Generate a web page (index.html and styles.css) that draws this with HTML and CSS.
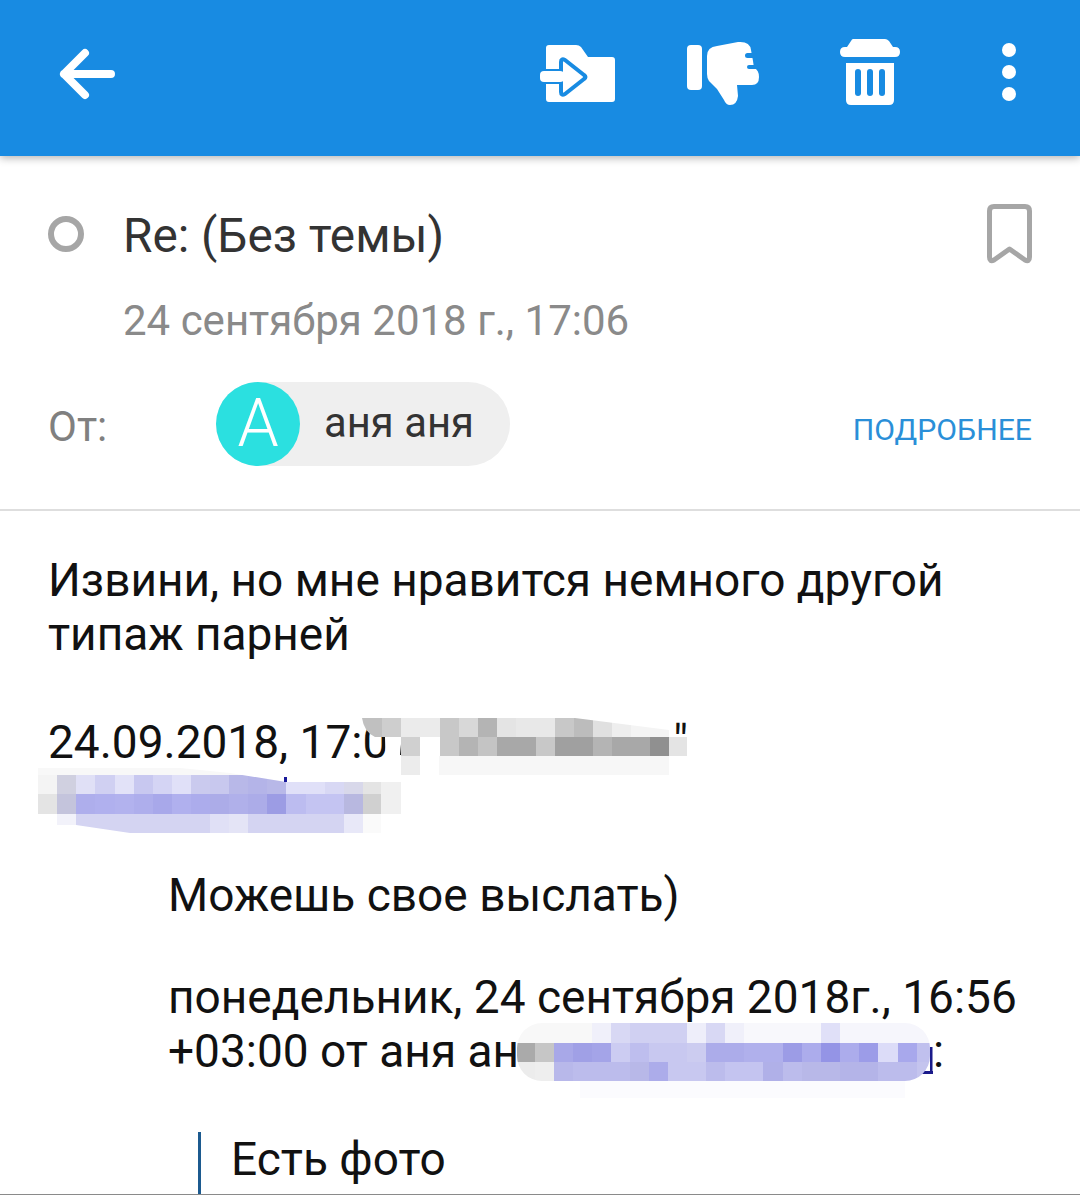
FILE: index.html
```html
<!DOCTYPE html>
<html lang="ru">
<head>
  <meta charset="UTF-8" />
  <meta name="viewport" content="width=device-width, initial-scale=1.0"/>
  <title>Письмо</title>
  <link rel="stylesheet" href="styles.css">
</head>
<body>

<div class="screen">
  <header class="toolbar">
    <svg class="toolbar-icons" width="1080" height="156" viewBox="0 0 1080 156">
      <!-- back -->
      <path d="M111 74H64M85 53L64 74L85 95" fill="none" stroke="#fff" stroke-width="8" stroke-linecap="round" stroke-linejoin="round"/>
      <!-- move to folder -->
      <path d="M549 45H576Q579 45 581 47L588 57H612Q615 57 615 60V99Q615 102 612 102H549Q546 102 546 99V48Q546 45 549 45Z" fill="#fff"/>
      <path d="M543 71H561V62Q561 58 565 60L584 75Q587 77 584 79L565 94Q561 96 561 92V82H543Q540 82 540 76.500Q540 71 543 71Z" fill="#fff" stroke="#188be2" stroke-width="4" stroke-linejoin="round"/>
      <rect x="540" y="71" width="24" height="11" rx="4" fill="#fff"/>
      <!-- spam -->
      <rect x="687" y="45" width="15" height="45" rx="4" fill="#fff"/>
      <path d="M707 56Q707 47 717 46L738 42Q750 41 751 50L753 61L754 68Q759 70 759 77Q759 85 752 85H737L738 96Q737 105 730 105Q726 105 724 100L717 89L709 81Q707 78 707 74Z" fill="#fff"/>
      <rect x="745" y="53" width="12" height="5" rx="2.500" fill="#188be2"/>
      <rect x="747" y="65" width="12" height="4" rx="2" fill="#188be2"/>
      <!-- delete -->
      <path d="M853 39H885Q887 39 889 41L893 47H895Q900 47 900 52Q900 57 895 57H845Q840 57 840 52Q840 47 845 47H847L851 41Q852 39 853 39Z" fill="#fff"/>
      <path d="M846 63H894V100Q894 105 889 105H851Q846 105 846 100Z" fill="#fff"/>
      <rect x="855" y="69" width="6" height="27" rx="3" fill="#188be2"/>
      <rect x="867" y="69" width="6" height="27" rx="3" fill="#188be2"/>
      <rect x="879" y="69" width="6" height="27" rx="3" fill="#188be2"/>
      <!-- more -->
      <circle cx="1009" cy="50" r="7" fill="#fff"/>
      <circle cx="1009" cy="72" r="7" fill="#fff"/>
      <circle cx="1009" cy="94" r="7" fill="#fff"/>
    </svg>
  </header>

  <section class="meta">
    <div class="subject-row">
      <span class="unread-dot"></span>
      <h1 class="subject">Re: (Без темы)</h1>
      <svg class="bookmark" width="45" height="60" viewBox="0 0 45 60">
        <path d="M7 2.500H38Q42.500 2.500 42.500 7V53Q42.500 58.500 38 56L22.500 45L7 56Q2.500 58.500 2.500 53V7Q2.500 2.500 7 2.500Z" fill="none" stroke="#a6a6a6" stroke-width="5" stroke-linejoin="round"/>
      </svg>
    </div>
    <div class="date">24 сентября 2018 г., 17:06</div>
    <div class="from-row">
      <span class="from-label">От:</span>
      <span class="sender">
        <span class="avatar">А</span>
        <span class="sender-name">аня аня</span>
      </span>
      <span class="more-link">ПОДРОБНЕЕ</span>
    </div>
  </section>

  <main class="message">
    <p class="reply">Извини, но мне нравится немного другой<br>типаж парней</p>
    <p class="quote-head">24.09.2018, 17:06,<span class="gap-name"></span>"<br>&nbsp;</p>
    <div class="quote">
      <p class="quote-text">Можешь свое выслать)</p>
      <p class="quote-head-2">понедельник, 24 сентября 2018г., 16:56<br>+03:00 от аня ан<span class="gap-mail"></span><span class="mail-end"></span>:</p>
      <div class="quote-inner">Есть фото</div>
    </div>
  </main>

  <!-- pixelated patches over the hidden names and addresses -->
  <svg class="censor" width="1080" height="1195" viewBox="0 0 1080 1195">
    <defs>
      <clipPath id="clipName"><path d="M362 718H575L669 730L688 732V775H401L401 745L386 737H375Q364 732 362 718Z"/></clipPath>
      <clipPath id="clipMail"><path d="M38 768H180L230 773L286 782H401V814H381V833H130L76 825H38Z"/></clipPath>
      <clipPath id="clipAddr"><rect x="517" y="1023" width="413" height="58" rx="25"/></clipPath>
    </defs>

    <path d="M385 737H440V775H401L386 770Z" fill="#fff"/>
    <path d="M401 744H405L402 755H400Z" fill="#111"/>
    <g clip-path="url(#clipName)">
      <rect x="401" y="737" width="286" height="38" fill="#fff"/>
      <rect x="362" y="718" width="20" height="19" fill="#c0c0c0"/>
      <rect x="382" y="718" width="19" height="19" fill="#cecece"/>
      <rect x="401" y="718" width="39" height="19" fill="#ebebeb"/>
      <rect x="440" y="718" width="19" height="19" fill="#c8c8c8"/>
      <rect x="459" y="718" width="19" height="19" fill="#d8d8d8"/>
      <rect x="478" y="718" width="19" height="19" fill="#b4b4b4"/>
      <rect x="497" y="718" width="19" height="19" fill="#e4e4e4"/>
      <rect x="516" y="718" width="39" height="19" fill="#e8e8e8"/>
      <rect x="555" y="718" width="19" height="19" fill="#c8c8c8"/>
      <rect x="574" y="718" width="19" height="19" fill="#bcbcbc"/>
      <rect x="593" y="718" width="19" height="19" fill="#e0e0e0"/>
      <rect x="612" y="718" width="19" height="19" fill="#eeeeee"/>
      <rect x="631" y="718" width="38" height="19" fill="#f4f4f4"/>

      <rect x="401" y="737" width="19" height="19" fill="#d0d0d0"/>
      <rect x="440" y="737" width="19" height="19" fill="#c8c8c8"/>
      <rect x="459" y="737" width="19" height="19" fill="#b4b4b4"/>
      <rect x="478" y="737" width="19" height="19" fill="#c4c4c4"/>
      <rect x="497" y="737" width="39" height="19" fill="#a8a8a8"/>
      <rect x="536" y="737" width="19" height="19" fill="#c8c8c8"/>
      <rect x="555" y="737" width="38" height="19" fill="#a0a0a0"/>
      <rect x="593" y="737" width="19" height="19" fill="#b4b4b4"/>
      <rect x="612" y="737" width="38" height="19" fill="#a8a8a8"/>
      <rect x="650" y="737" width="19" height="19" fill="#909090"/>
      <rect x="669" y="737" width="18" height="19" fill="#e4e4e4"/>

      <rect x="401" y="756" width="19" height="19" fill="#ececec"/>
      <rect x="439" y="756" width="230" height="19" fill="#f7f7f7"/>
    </g>

    <path d="M38 764H286V782H38Z" fill="#fff"/>
    <g clip-path="url(#clipMail)">
      <rect x="38" y="764" width="363" height="11" fill="#f8f8f8"/>
      <rect x="38" y="775" width="19" height="19" fill="#f4f4f4"/>
      <rect x="57" y="775" width="19" height="19" fill="#d0d0e0"/>
      <rect x="76" y="775" width="19" height="19" fill="#e0e0f6"/>
      <rect x="95" y="775" width="20" height="19" fill="#d0d0f2"/>
      <rect x="115" y="775" width="19" height="19" fill="#e2e2f8"/>
      <rect x="134" y="775" width="19" height="19" fill="#c8c8f0"/>
      <rect x="153" y="775" width="19" height="19" fill="#d4d4f4"/>
      <rect x="172" y="775" width="19" height="19" fill="#e0e0f8"/>
      <rect x="191" y="775" width="19" height="19" fill="#cacaee"/>
      <rect x="210" y="775" width="19" height="19" fill="#c8c8ee"/>
      <rect x="229" y="775" width="19" height="19" fill="#b8b8e8"/>
      <rect x="248" y="775" width="19" height="19" fill="#b4b4e8"/>
      <rect x="267" y="775" width="19" height="19" fill="#b8b8e8"/>
      <rect x="286" y="775" width="39" height="19" fill="#e0e0f8"/>
      <rect x="325" y="775" width="19" height="19" fill="#d8d8f4"/>
      <rect x="344" y="775" width="19" height="19" fill="#d8d8ea"/>
      <rect x="363" y="775" width="18" height="19" fill="#e4e4e4"/>
      <rect x="381" y="775" width="20" height="19" fill="#f0f0f0"/>

      <rect x="38" y="794" width="19" height="20" fill="#e4e4e4"/>
      <rect x="57" y="794" width="19" height="20" fill="#c4c4dc"/>
      <rect x="76" y="794" width="19" height="20" fill="#aeaeec"/>
      <rect x="95" y="794" width="20" height="20" fill="#b0b0ee"/>
      <rect x="115" y="794" width="19" height="20" fill="#b2b2ee"/>
      <rect x="134" y="794" width="19" height="20" fill="#aeaeec"/>
      <rect x="153" y="794" width="19" height="20" fill="#a8a8ea"/>
      <rect x="172" y="794" width="19" height="20" fill="#b0b0ee"/>
      <rect x="191" y="794" width="19" height="20" fill="#acacec"/>
      <rect x="210" y="794" width="19" height="20" fill="#acace8"/>
      <rect x="229" y="794" width="19" height="20" fill="#b0b0ea"/>
      <rect x="248" y="794" width="19" height="20" fill="#acace8"/>
      <rect x="267" y="794" width="19" height="20" fill="#9c9ce4"/>
      <rect x="286" y="794" width="20" height="20" fill="#bcbcf0"/>
      <rect x="306" y="794" width="38" height="20" fill="#c4c4f2"/>
      <rect x="344" y="794" width="19" height="20" fill="#b8b8e0"/>
      <rect x="363" y="794" width="18" height="20" fill="#d0d0d0"/>
      <rect x="381" y="794" width="20" height="20" fill="#f0f0f0"/>

      <rect x="57" y="814" width="19" height="19" fill="#f2f2fa"/>
      <rect x="76" y="814" width="134" height="19" fill="#d4d4f2"/>
      <rect x="210" y="814" width="19" height="19" fill="#e0e0f6"/>
      <rect x="229" y="814" width="19" height="19" fill="#e4e4f6"/>
      <rect x="248" y="814" width="96" height="19" fill="#d4d4f2"/>
      <rect x="344" y="814" width="19" height="19" fill="#e8e8f8"/>
      <rect x="363" y="814" width="18" height="19" fill="#fafafa"/>
    </g>
    <rect x="284" y="777" width="3" height="5" fill="#1a1a9a"/>

    <rect x="580" y="1081" width="325" height="17" fill="#fbfbfe"/>
    <rect x="930" y="1047" width="2.500" height="24" fill="#1a1a8a"/>
    <g clip-path="url(#clipAddr)">
      <rect x="517" y="1023" width="75" height="20" fill="#f8f8f8"/>
      <rect x="592" y="1023" width="19" height="20" fill="#f0f0fa"/>
      <rect x="611" y="1023" width="19" height="20" fill="#d8d8f4"/>
      <rect x="630" y="1023" width="57" height="20" fill="#d0d0f2"/>
      <rect x="687" y="1023" width="19" height="20" fill="#eeeefa"/>
      <rect x="706" y="1023" width="19" height="20" fill="#d8d8f4"/>
      <rect x="725" y="1023" width="19" height="20" fill="#f0f0fa"/>
      <rect x="744" y="1023" width="77" height="20" fill="#f8f8fc"/>
      <rect x="821" y="1023" width="19" height="20" fill="#e0e0f8"/>
      <rect x="840" y="1023" width="90" height="20" fill="#f6f6fc"/>

      <rect x="517" y="1043" width="18" height="19" fill="#aaaaaa"/>
      <rect x="535" y="1043" width="19" height="19" fill="#c6c6c6"/>
      <rect x="554" y="1043" width="19" height="19" fill="#a8a8e8"/>
      <rect x="573" y="1043" width="19" height="19" fill="#a0a0e6"/>
      <rect x="592" y="1043" width="19" height="19" fill="#a4a4e8"/>
      <rect x="611" y="1043" width="19" height="19" fill="#ccccf2"/>
      <rect x="630" y="1043" width="19" height="19" fill="#bebeee"/>
      <rect x="649" y="1043" width="38" height="19" fill="#c8c8f0"/>
      <rect x="687" y="1043" width="19" height="19" fill="#ccccf0"/>
      <rect x="706" y="1043" width="38" height="19" fill="#acacea"/>
      <rect x="744" y="1043" width="39" height="19" fill="#b0b0ec"/>
      <rect x="783" y="1043" width="19" height="19" fill="#9c9ce6"/>
      <rect x="802" y="1043" width="19" height="19" fill="#acacec"/>
      <rect x="821" y="1043" width="19" height="19" fill="#9494e6"/>
      <rect x="840" y="1043" width="19" height="19" fill="#acacec"/>
      <rect x="859" y="1043" width="19" height="19" fill="#9c9ce8"/>
      <rect x="878" y="1043" width="20" height="19" fill="#dcdcf8"/>
      <rect x="898" y="1043" width="19" height="19" fill="#a8a8ec"/>
      <rect x="917" y="1043" width="13" height="19" fill="#c0c0ee"/>

      <rect x="517" y="1062" width="18" height="19" fill="#ececec"/>
      <rect x="535" y="1062" width="19" height="19" fill="#eeeeee"/>
      <rect x="554" y="1062" width="19" height="19" fill="#b8b8ea"/>
      <rect x="573" y="1062" width="57" height="19" fill="#bcbcec"/>
      <rect x="630" y="1062" width="19" height="19" fill="#b8b8e8"/>
      <rect x="649" y="1062" width="19" height="19" fill="#acacea"/>
      <rect x="668" y="1062" width="38" height="19" fill="#c8c8f0"/>
      <rect x="706" y="1062" width="19" height="19" fill="#bcbcec"/>
      <rect x="725" y="1062" width="38" height="19" fill="#c4c4f0"/>
      <rect x="763" y="1062" width="20" height="19" fill="#b0b0e8"/>
      <rect x="783" y="1062" width="19" height="19" fill="#bcbcec"/>
      <rect x="802" y="1062" width="38" height="19" fill="#b8b8e8"/>
      <rect x="840" y="1062" width="38" height="19" fill="#b4b4e8"/>
      <rect x="878" y="1062" width="39" height="19" fill="#bcbcec"/>
      <rect x="917" y="1062" width="13" height="19" fill="#c4c4ee"/>
    </g>
  </svg>
</div>

</body>
</html>
```

FILE: styles.css
```css
* {
  box-sizing: border-box;
}

body {
  margin: 0;
  background: #ffffff;
  font-family: 'Roboto', sans-serif;
  color: #111111;
}

.screen {
  position: relative;
  width: 1080px;
  height: 1195px;
  overflow: hidden;
  border-bottom: 1px solid #8a8a8a;
}

.toolbar {
  height: 156px;
  background: #188be2;
  box-shadow: 0 2px 8px rgba(0, 0, 0, 0.3);
}

.toolbar-icons {
  display: block;
}

.meta {
  height: 355px;
  padding: 48px 48px 0;
  border-bottom: 2px solid #dedede;
}

.subject-row {
  display: flex;
  align-items: center;
  height: 60px;
}

.unread-dot {
  width: 36px;
  height: 36px;
  margin-right: 39px;
  border: 6px solid #a6a6a6;
  border-radius: 50%;
}

.subject {
  flex: 1;
  margin: 0;
  padding-top: 4px;
  font-size: 47.700px;
  font-weight: 400;
  line-height: 60px;
  color: #333333;
}

.date {
  margin: 32px 0 0 75px;
  font-size: 42px;
  line-height: 50px;
  color: #8a8a8a;
}

.from-row {
  display: flex;
  align-items: center;
  margin-top: 36px;
  height: 84px;
}

.from-label {
  width: 168px;
  padding-top: 4px;
  font-size: 42px;
  color: #808080;
}

.sender {
  display: flex;
  align-items: center;
  width: 294px;
  height: 84px;
  border-radius: 42px;
  background: #efefef;
}

.avatar {
  width: 84px;
  height: 84px;
  border-radius: 50%;
  background: #2be0e0;
  color: #ffffff;
  font-size: 66px;
  font-weight: 300;
  line-height: 84px;
  text-align: center;
}

.sender-name {
  margin-left: 24px;
  margin-bottom: 3px;
  font-size: 41.800px;
  color: #333333;
}

.more-link {
  margin-left: auto;
  padding-top: 10px;
  font-size: 30.200px;
  color: #2a8fd8;
}

.message {
  padding: 42px 48px 0;
  font-size: 46px;
  line-height: 54px;
}

.message p {
  margin: 0;
}

.quote-head {
  margin-top: 54px !important;
}

.gap-name {
  display: inline-block;
  width: 250px;
}

.gap-mail {
  display: inline-block;
  width: 398px;
}

.mail-end {
  display: inline-block;
  width: 16px;
  height: 4px;
  border-bottom: 3px solid #1a1a8a;
  vertical-align: -7px;
}

.quote {
  margin: 45px 0 0 120px;
}

.quote-head-2 {
  margin-top: 48px !important;
}

.quote-inner {
  margin: 54px 0 0 30px;
  padding: 0 0 0 30px;
  border-left: 3px solid #1c5a8f;
  height: 120px;
}

.bookmark {
  display: block;
}

.censor {
  position: absolute;
  top: 0;
  left: 0;
}
```
